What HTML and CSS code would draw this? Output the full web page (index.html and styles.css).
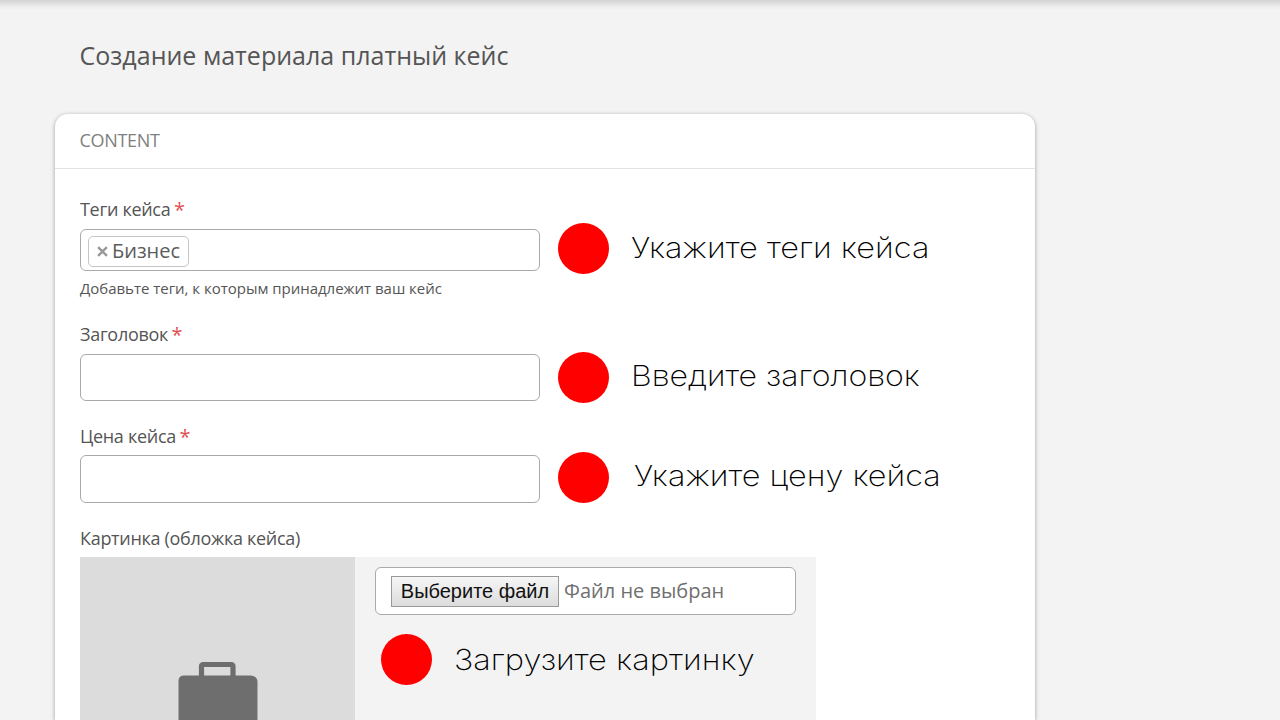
FILE: index.html
```html
<!DOCTYPE html>
<html lang="ru">
<head>
    <meta charset="UTF-8">
    <meta name="viewport" content="width=device-width, initial-scale=1.0">
    <title>Создание материала платный кейс</title>
    <link rel="stylesheet" href="styles.css">
</head>
<body>
    <div class="top-shadow"></div>
    <h1>Создание материала платный кейс</h1>
    <form class="card">
        <h2>CONTENT</h2>
        <div class="card-body">
            <div class="field field-tags">
                <label><span>Теги кейса</span><span class="required">*</span></label>
                <div class="row">
                    <div class="tags">
                        <span class="tag"><svg class="tag-remove" viewBox="0 0 10 10"><path d="M1 1 L9 9 M9 1 L1 9"/></svg><span class="tag-text">Бизнес</span></span>
                    </div>
                    <span class="dot"></span>
                    <span class="hint hint-tags">Укажите теги кейса</span>
                </div>
                <p class="description">Добавьте теги, к которым принадлежит ваш кейс</p>
            </div>
            <div class="field field-title">
                <label><span>Заголовок</span><span class="required">*</span></label>
                <div class="row">
                    <input type="text" class="input">
                    <span class="dot"></span>
                    <span class="hint hint-title">Введите заголовок</span>
                </div>
            </div>
            <div class="field field-price">
                <label><span>Цена кейса</span><span class="required">*</span></label>
                <div class="row">
                    <input type="text" class="input">
                    <span class="dot"></span>
                    <span class="hint hint-price">Укажите цену кейса</span>
                </div>
            </div>
            <div class="field">
                <label><span>Картинка (обложка кейса)</span></label>
                <div class="upload">
                    <div class="preview">
                        <svg class="briefcase" width="80" height="59" viewBox="0 0 80 59">
                            <path d="M23.5 16 V5.5 Q23.5 3.5 25.5 3.5 H53 Q55 3.5 55 5.5 V16" fill="none" stroke="#6e6e6e" stroke-width="5.2"/>
                            <path d="M0.5 59 V20 Q0.5 14.5 6 14.5 H73 Q79.5 15 79.5 21 V59 Z" fill="#6e6e6e"/>
                        </svg>
                    </div>
                    <div class="upload-main">
                        <div class="file">
                            <button type="button">Выберите файл</button>
                            <span class="file-name">Файл не выбран</span>
                        </div>
                        <div class="row">
                            <span class="dot"></span>
                            <span class="hint hint-image">Загрузите картинку</span>
                        </div>
                    </div>
                </div>
            </div>
        </div>
    </form>
</body>
</html>
```
FILE: styles.css
```css
* {
    box-sizing: border-box;
}

body {
    margin: 0;
    height: 720px;
    overflow: hidden;
    background: #f3f3f3;
    color: #555;
    font-family: "Open Sans", sans-serif;
}

.top-shadow {
    height: 10px;
    background: linear-gradient(#d2d2d2, #dedede 30%, #ececec 65%, #f3f3f3);
}

h1 {
    margin: 27px 0 0 79.5px;
    height: 76px;
    font-size: 25px;
    line-height: 36px;
    font-weight: 400;
    white-space: nowrap;
}

.card {
    width: 980px;
    height: 606px;
    margin: 1px 0 0 55px;
    background: #fff;
    border-radius: 13px 13px 0 0;
    box-shadow: 0 1px 4px rgba(0, 0, 0, 0.35);
}

h2 {
    margin: 0;
    height: 55px;
    padding-left: 24.5px;
    border-bottom: 1px solid #e2e2e2;
    color: #808080;
    font-size: 18px;
    line-height: 53px;
    font-weight: 400;
    letter-spacing: -0.3px;
}

.card-body {
    padding: 27px 25px 0;
}

.field label {
    display: flex;
    height: 27px;
    margin-bottom: 6px;
    font-size: 18px;
    line-height: 27px;
    letter-spacing: -0.3px;
}

.required {
    margin-left: 3.5px;
    color: #e05252;
    font-size: 20px;
    font-weight: 500;
}

.row {
    display: flex;
    align-items: center;
}

.tags,
.input,
.file {
    border: 1px solid #aaa;
    border-radius: 6px;
    background: #fff;
}

.tags {
    width: 460px;
    height: 42px;
    padding: 6px 7px;
}

.tag {
    display: flex;
    align-items: center;
    width: 101px;
    height: 31px;
    padding-left: 8px;
    border: 1px solid #c4c4c4;
    border-radius: 5px;
    font-size: 20px;
    line-height: 27px;
    color: #5c5c5c;
}

.tag-text {
    margin-top: -2px;
}

.tag-remove {
    width: 11px;
    height: 11px;
    margin-right: 4px;
    fill: none;
    stroke: #999;
    stroke-width: 2.2;
}

.input {
    width: 460px;
    height: 47px;
}

.dot {
    flex: none;
    width: 51px;
    height: 51px;
    margin: -5px 0 -5px 18px;
    border-radius: 50%;
    background: #f00;
}

.hint {
    margin-left: 22px;
    color: #000;
    font-family: Inter, sans-serif;
    font-size: 29px;
    font-weight: 200;
    line-height: 36px;
    white-space: nowrap;
    transform: scaleX(1.123);
    transform-origin: left;
}

.hint-tags {
    margin-top: -4px;
}

.hint-title {
    margin-top: -3px;
    transform: scaleX(1.107);
}

.hint-price {
    margin-top: -6px;
    margin-left: 25px;
    transform: scaleX(1.12);
}

.description {
    margin: 5px 0 21px;
    font-size: 15px;
    line-height: 24px;
    letter-spacing: -0.02px;
}

.field-tags .dot {
    margin-top: -8px;
}

.field-title {
    margin-bottom: 22px;
}

.field-price label {
    margin-bottom: 5px;
}

.field-price .input {
    height: 48px;
}

.field-price {
    margin-bottom: 22px;
}

.field-price .dot {
    margin-top: -8px;
}

.field:last-child label {
    margin-bottom: 5px;
}

.upload {
    display: flex;
    width: 736px;
    height: 163px;
    background: #f3f3f3;
}

.preview {
    width: 275px;
    padding: 104px 0 0 98px;
    background: #dcdcdc;
}

.briefcase {
    display: block;
}

.upload-main {
    padding: 10px 20px;
}

.file {
    display: flex;
    align-items: center;
    width: 421px;
    height: 48px;
    padding-left: 15px;
    font-size: 20px;
    line-height: 28px;
    color: #707070;
}

.file button {
    width: 168px;
    height: 31px;
    margin: 1px 5px 0 0;
    padding: 0;
    border: 1px solid #999;
    border-radius: 0;
    background: linear-gradient(#f6f6f6, #dcdcdc);
    color: #111;
    font: 20px "Liberation Sans", sans-serif;
}

.upload-main .row {
    margin-top: 19px;
}

.upload-main .dot {
    margin: 0 0 0 6px;
}
```
